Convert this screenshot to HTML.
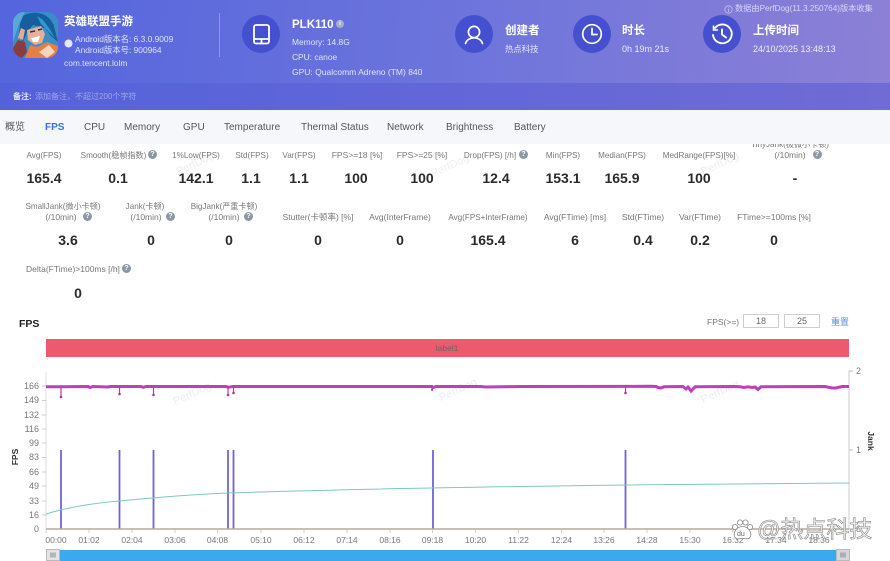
<!DOCTYPE html>
<html><head><meta charset="utf-8"><style>
*{margin:0;padding:0;box-sizing:border-box}
html,body{width:890px;height:561px;overflow:hidden;background:#fff}
body{position:relative;font-family:"Liberation Sans","Noto Sans CJK SC",sans-serif;color:#666;filter:blur(.35px)}
.t{position:absolute;white-space:nowrap;line-height:0;font-size:9px}
.c{transform:translateX(-50%)}
.w{color:#fff}
.s{color:rgba(255,255,255,.8);font-size:8.4px}
.d{color:rgba(255,255,255,.85);font-size:9px}
.h{font-weight:bold;font-size:11.5px;color:#fff}
.l{color:#777;font-size:8.5px}
.n{font-size:8.1px}
.v{color:#2b2b2b;font-size:14px;font-weight:bold}
.q{display:inline-block;width:9px;height:9px;border-radius:50%;background:#8c96a6;color:#fff;font-size:7px;line-height:9px;text-align:center;vertical-align:middle;font-weight:bold}
.tab{font-size:10px;color:#555;top:127.5px}
.ic{position:absolute;width:38px;height:38px;border-radius:50%;background:#4450cf;top:15px}
.ic svg{position:absolute;left:0;top:0}
#hd{position:absolute;left:0;top:0;width:890px;height:83px;background:linear-gradient(95deg,#5465dd 0%,#6c74dc 50%,#8c80d6 100%)}
#nb{position:absolute;left:0;top:83px;width:890px;height:27px;background:linear-gradient(90deg,#5462da,#706bd5)}
#tb{position:absolute;left:0;top:110px;width:890px;height:34px;background:#f6f7fb;z-index:3}
.ib{position:absolute;top:314px;height:14px;border:1px solid #cfcfcf;text-align:center;font-size:9px;line-height:12px;color:#666}
.wm{position:absolute;color:#eeeef2;font-size:11px;transform:rotate(-25deg);white-space:nowrap}
</style></head><body>
<div id="hd"></div><div id="nb"></div><div id="tb"></div>

<svg style="position:absolute;left:13px;top:12px" width="45" height="46" viewBox="0 0 45 46">
<defs><clipPath id="a"><rect width="45" height="46" rx="11"/></clipPath></defs>
<g clip-path="url(#a)">
<rect width="45" height="46" fill="#3a8ec6"/>
<path d="M0 0H12L6 12 2 24 0 30Z" fill="#58a8d8"/>
<path d="M10 4C20-2 36 0 41 14L45 30 38 24 32 16 20 13 14 20 10 30 6 24 7 12Z" fill="#175f9c"/>
<path d="M24 4 30 8 36 16 42 26 36 20 28 12Z" fill="#2f9ad0"/>
<path d="M14 18 28 14 32 22 29 31 22 33 15 28Z" fill="#e6b097"/>
<path d="M18 26 27 24 25 30 20 30Z" fill="#fff"/>
<path d="M17 20l5-1M25 18l4-1" stroke="#26335e" stroke-width="1.6"/>
<path d="M12 46 17 33 24 35 34 30 45 34V46Z" fill="#e47f45"/>
<path d="M26 40 36 33 42 40 34 46Z" fill="#f6d5bd"/>
<path d="M0 36 5 28 12 30 14 40 9 46H0Z" fill="#8c3c3c"/>
<path d="M5 26 8 16 12 18 10 28Z" fill="#e9a98f"/>
</g></svg>

<div class="t h" style="left:64px;top:22px">英雄联盟手游</div>
<svg style="position:absolute;left:64px;top:39px" width="9" height="9"><circle cx="4.5" cy="4.5" r="4" fill="#e6e9fb"/></svg>
<div class="t s" style="left:75px;top:39px">Android版本名: 6.3.0.9009</div>
<div class="t s" style="left:75px;top:49.5px">Android版本号: 900964</div>
<div class="t s" style="left:64px;top:62.5px">com.tencent.lolm</div>
<div style="position:absolute;left:219px;top:13px;width:1px;height:44px;background:rgba(255,255,255,.3)"></div>

<div class="ic" style="left:242px">
<svg width="38" height="38" fill="none" stroke="#fff" stroke-width="1.8"><rect x="12" y="10" width="15" height="18.500" rx="2"/><path d="M12 24H27M19.500 24V28.500"/></svg></div>
<div class="t h" style="left:292px;top:25px">PLK110</div>
<span class="q" style="position:absolute;left:336px;top:20px;background:#a8aec4;width:8px;height:8px;line-height:8px;font-size:6px">i</span>
<div class="t s" style="left:292px;top:42px">Memory: 14.8G</div>
<div class="t s" style="left:292px;top:57px">CPU: canoe</div>
<div class="t s" style="left:292px;top:72px;font-size:8.5px">GPU: Qualcomm Adreno (TM) 840</div>

<div class="ic" style="left:455px">
<svg width="38" height="38" fill="none" stroke="#fff" stroke-width="1.7"><circle cx="19" cy="17" r="5.600"/><path d="M10.500 28.500C11.500 25 15 22.800 19 22.800S26.500 25 27.500 28.500" stroke-linecap="round"/></svg></div>
<div class="t h" style="left:505px;top:31px">创建者</div>
<div class="t s" style="left:505px;top:49px">热点科技</div>

<div class="ic" style="left:572.5px">
<svg width="38" height="38" fill="none" stroke="#fff" stroke-width="1.7"><circle cx="19" cy="19" r="9.300"/><path d="M19 13.500V19.500H24" stroke-linecap="round"/></svg></div>
<div class="t h" style="left:622px;top:31px">时长</div>
<div class="t d" style="left:622px;top:49px">0h 19m 21s</div>

<div class="ic" style="left:703px">
<svg width="38" height="38" fill="none" stroke="#fff" stroke-width="1.9"><path d="M12 13A9.400 9.400 0 1 1 10 20" stroke-linecap="round"/><path d="M10.500 10.500V15H15" stroke-width="1.600"/><path d="M19 14.500V19.500L23 22.500" stroke-linecap="round"/></svg></div>
<div class="t h" style="left:753px;top:31px">上传时间</div>
<div class="t d" style="left:753px;top:49px">24/10/2025 13:48:13</div>

<svg style="position:absolute;left:724px;top:5px" width="9" height="9" fill="none" stroke="rgba(255,255,255,.55)" stroke-width=".8"><circle cx="4.500" cy="4.500" r="3.700"/><path d="M4.500 4V7M4.500 2.400V3.200"/></svg>
<div class="t" style="left:735px;top:9px;font-size:8.2px;color:rgba(255,255,255,.68)">数据由PerfDog(11.3.250764)版本收集</div>

<div class="t" style="left:13px;top:96.5px;font-size:8px;font-weight:bold;color:#e6e8fa">备注:</div>
<div class="t" style="left:35px;top:96.5px;font-size:8px;color:rgba(255,255,255,.42)">添加备注，不超过200个字符</div>

<div style="z-index:4;position:absolute;left:0;top:0">
<div class="t tab" style="left:5px">概览</div>
<div class="t tab" style="left:45px;color:#3c6fe0;font-weight:bold">FPS</div>
<div class="t tab" style="left:84px">CPU</div>
<div class="t tab" style="left:124px">Memory</div>
<div class="t tab" style="left:183px">GPU</div>
<div class="t tab" style="left:224px">Temperature</div>
<div class="t tab" style="left:301px">Thermal Status</div>
<div class="t tab" style="left:387px">Network</div>
<div class="t tab" style="left:446px">Brightness</div>
<div class="t tab" style="left:514px">Battery</div>
</div>

<div class="wm" style="left:175px;top:158px">PerfDog</div>
<div class="wm" style="left:430px;top:160px">PerfDog</div>
<div class="wm" style="left:700px;top:158px">PerfDog</div>
<div class="wm" style="left:172px;top:388px">PerfDog</div>
<div class="wm" style="left:438px;top:384px">PerfDog</div>
<div class="wm" style="left:700px;top:386px">PerfDog</div>

<div class="t l n c" style="left:44px;top:155.500px">Avg(FPS)</div>
<div class="t l n c" style="left:113.500px;top:155.500px">Smooth(稳帧指数)</div><span class="q" style="position:absolute;left:148px;top:150px">?</span>
<div class="t l n c" style="left:196px;top:155.500px">1%Low(FPS)</div>
<div class="t l n c" style="left:252px;top:155.500px">Std(FPS)</div>
<div class="t l n c" style="left:299px;top:155.500px">Var(FPS)</div>
<div class="t l c" style="left:357px;top:155px">FPS&gt;=18 [%]</div>
<div class="t l c" style="left:422px;top:155px">FPS&gt;=25 [%]</div>
<div class="t l n c" style="left:490px;top:155.500px">Drop(FPS) [/h]</div><span class="q" style="position:absolute;left:519px;top:150px">?</span>
<div class="t l n c" style="left:563px;top:155.500px">Min(FPS)</div>
<div class="t l n c" style="left:622px;top:155.500px">Median(FPS)</div>
<div class="t l n c" style="left:699px;top:155.500px">MedRange(FPS)[%]</div>
<div class="t l n c" style="left:790px;top:145px">TinyJank(极微小卡顿)</div>
<div class="t l c" style="left:790px;top:155px">(/10min)</div><span class="q" style="position:absolute;left:812.500px;top:150px">?</span>

<div class="t v c" style="left:44px;top:178px">165.4</div>
<div class="t v c" style="left:118px;top:178px">0.1</div>
<div class="t v c" style="left:196px;top:178px">142.1</div>
<div class="t v c" style="left:251px;top:178px">1.1</div>
<div class="t v c" style="left:299px;top:178px">1.1</div>
<div class="t v c" style="left:356px;top:178px">100</div>
<div class="t v c" style="left:422px;top:178px">100</div>
<div class="t v c" style="left:496px;top:178px">12.4</div>
<div class="t v c" style="left:563px;top:178px">153.1</div>
<div class="t v c" style="left:622px;top:178px">165.9</div>
<div class="t v c" style="left:699px;top:178px">100</div>
<div class="t v c" style="left:795px;top:178px">-</div>

<div class="t l n c" style="left:63px;top:206.500px">SmallJank(微小卡顿)</div>
<div class="t l c" style="left:61px;top:217px">(/10min)</div><span class="q" style="position:absolute;left:83px;top:212px">?</span>
<div class="t l n c" style="left:145px;top:206.500px">Jank(卡顿)</div>
<div class="t l c" style="left:146px;top:217px">(/10min)</div><span class="q" style="position:absolute;left:166px;top:212px">?</span>
<div class="t l n c" style="left:224px;top:206.500px">BigJank(严重卡顿)</div>
<div class="t l c" style="left:224px;top:217px">(/10min)</div><span class="q" style="position:absolute;left:244px;top:212px">?</span>
<div class="t l c" style="left:318px;top:217px">Stutter(卡顿率) [%]</div>
<div class="t l c" style="left:400px;top:217px">Avg(InterFrame)</div>
<div class="t l n c" style="left:488px;top:217.500px">Avg(FPS+InterFrame)</div>
<div class="t l c" style="left:575px;top:217px">Avg(FTime) [ms]</div>
<div class="t l c" style="left:643px;top:217px">Std(FTime)</div>
<div class="t l c" style="left:700px;top:217px">Var(FTime)</div>
<div class="t l c" style="left:774px;top:217px">FTime&gt;=100ms [%]</div>

<div class="t v c" style="left:68px;top:240px">3.6</div>
<div class="t v c" style="left:151px;top:240px">0</div>
<div class="t v c" style="left:229px;top:240px">0</div>
<div class="t v c" style="left:318px;top:240px">0</div>
<div class="t v c" style="left:400px;top:240px">0</div>
<div class="t v c" style="left:488px;top:240px">165.4</div>
<div class="t v c" style="left:575px;top:240px">6</div>
<div class="t v c" style="left:643px;top:240px">0.4</div>
<div class="t v c" style="left:700px;top:240px">0.2</div>
<div class="t v c" style="left:774px;top:240px">0</div>

<div class="t l" style="left:26px;top:269px">Delta(FTime)&gt;100ms [/h]</div><span class="q" style="position:absolute;left:122px;top:264px">?</span>
<div class="t v c" style="left:78px;top:293px">0</div>

<div class="t" style="left:19px;top:324px;font-size:10.5px;font-weight:bold;color:#222">FPS</div>
<div class="t l" style="left:707px;top:321.500px">FPS(&gt;=)</div>
<div class="ib" style="left:743px;width:36px">18</div>
<div class="ib" style="left:784px;width:36px">25</div>
<div class="t" style="left:831px;top:321.500px;font-size:9px;color:#5b8fd8">重置</div>

<div style="position:absolute;left:46px;top:339px;width:803px;height:17.500px;background:#ee5a6d"></div>
<div class="t c" style="left:447px;top:347.500px;font-size:8.5px;color:#666">label1</div>

<svg style="position:absolute;left:0;top:360px" width="890" height="201" viewBox="0 360 890 201" font-family="Liberation Sans" font-size="9" fill="#777">
<path d="M46 372V529" stroke="#ddd" fill="none"/><path d="M849 371V529" stroke="#ccc" fill="none"/>
<path d="M42 386h4M42 400.500h4M42 415h4M42 429h4M42 443h4M42 457.500h4M42 472h4M42 486h4M42 501h4M42 515h4" stroke="#ccc" fill="none"/>
<path d="M849 371h4M849 450h4M849 529h4" stroke="#bbb" fill="none"/>
<g text-anchor="end"><text x="39" y="389">166</text><text x="39" y="403">149</text><text x="39" y="418">132</text><text x="39" y="432">116</text><text x="39" y="446">99</text><text x="39" y="460">83</text><text x="39" y="475">66</text><text x="39" y="489">49</text><text x="39" y="504">33</text><text x="39" y="518">16</text><text x="39" y="532">0</text></g>
<text x="856" y="374">2</text><text x="856" y="453">1</text><text x="856" y="532">0</text>
<text transform="translate(18 457) rotate(-90)" text-anchor="middle" font-size="8.500" font-weight="bold" fill="#333">FPS</text>
<text transform="translate(868 441) rotate(90)" text-anchor="middle" font-size="8.500" font-weight="bold" fill="#333">Jank</text>
<path d="M61 450V529M119.500 450V529M153.500 450V529M228 450V529M233.500 450V529M433 450V529M625.500 450V529" stroke="#6f63da" stroke-width="1.800" fill="none"/>
<path d="M46 514C62 509 85 504 119 501C140 499 180 495 228 493C300 490.500 400 488 625 485C720 484 790 483.500 849 483" stroke="#7ec8c0" stroke-width="1" fill="none"/>
<path d="M46 529H849" stroke="#b9aa9c" stroke-width="1.600"/>
<path d="M46 530v3M89 530v3M132 530v3M175 530v3M217.500 530v3M261 530v3M304 530v3M347 530v3M390 530v3M432.500 530v3M475.500 530v3M518.500 530v3M561.500 530v3M604 530v3M647 530v3M690 530v3M733 530v3M776 530v3M819 530v3" stroke="#ccc"/>
<g text-anchor="middle" font-size="8.500"><text x="56" y="543">00:00</text><text x="89" y="543">01:02</text><text x="132" y="543">02:04</text><text x="175" y="543">03:06</text><text x="217.500" y="543">04:08</text><text x="261" y="543">05:10</text><text x="304" y="543">06:12</text><text x="347" y="543">07:14</text><text x="390" y="543">08:16</text><text x="432.500" y="543">09:18</text><text x="475.500" y="543">10:20</text><text x="518.500" y="543">11:22</text><text x="561.500" y="543">12:24</text><text x="604" y="543">13:26</text><text x="647" y="543">14:28</text><text x="690" y="543">15:30</text><text x="733" y="543">16:32</text><text x="776" y="543">17:34</text><text x="819" y="543">18:36</text></g>
<path d="M46 386.800H60L88 386.500L90 387.500L93 386.500L108 387L110 386.500L141 386.500L143 387.300L146 386.500L226 386.500L228 387.300L233 386.500L432 386.500L433 387.500L436 386.500L480 386.500L486 387L520 386.500L650 386.300L656 386.500L658 387.500L661 388L664 386.800L683 386.500L686 389L688 387L691 391L695 386.800L735 386.500L740 386.800L744 387.500L748 386.800L752 387.500L755 387L758 389.500L761 386.800L825 386.500L832 388L836 388L842 386.500L849 386.500" stroke="#c03fb6" stroke-width="3" fill="none"/>
<path d="M61 386V397M119.500 386V394M153.500 386V395M228 386V395M233.500 386V393M432 386V390M625.500 386V393" stroke="#b83aa8" stroke-width="1.200" fill="none"/>
<g fill="#a83a96"><circle cx="61" cy="397" r="1.300"/><circle cx="119.500" cy="394" r="1.300"/><circle cx="153.500" cy="395" r="1.300"/><circle cx="228" cy="395" r="1.300"/><circle cx="233.500" cy="393" r="1.300"/><circle cx="432" cy="390" r="1"/><circle cx="625.500" cy="393" r="1.300"/></g>
<rect x="46" y="550" width="804" height="11" fill="#3aa9ee"/>
<rect x="46.500" y="549.500" width="13" height="11" fill="#e4e4e6" stroke="#bbb"/>
<rect x="836.500" y="549.500" width="13" height="11" fill="#d6d6da" stroke="#bbb"/>
<path d="M51 552.500v5M53 552.500v5M55 552.500v5M841 552.500v5M843 552.500v5M845 552.500v5" stroke="#888"/>
</svg>

<svg style="position:absolute;left:730px;top:518px" width="24" height="24" fill="#fff" stroke="#888" stroke-width=".8"><circle cx="5" cy="9" r="2.600"/><circle cx="10" cy="4.500" r="2.600"/><circle cx="15.500" cy="4.500" r="2.600"/><circle cx="20" cy="9" r="2.600"/><path d="M12.500 8.500C18 8.500 22 14 20.500 18.500C19 22 16 20.500 12.500 20.500S6 22 4.500 18.500C3 14 7 8.500 12.500 8.500Z"/></svg>
<div class="t" style="left:737px;top:535px;font-size:7px;color:#666">du</div>
<div class="t" style="left:757px;top:529px;font-size:23px;color:#f4f4f4;-webkit-text-stroke:.6px #888">@热点科技</div>
</body></html>
